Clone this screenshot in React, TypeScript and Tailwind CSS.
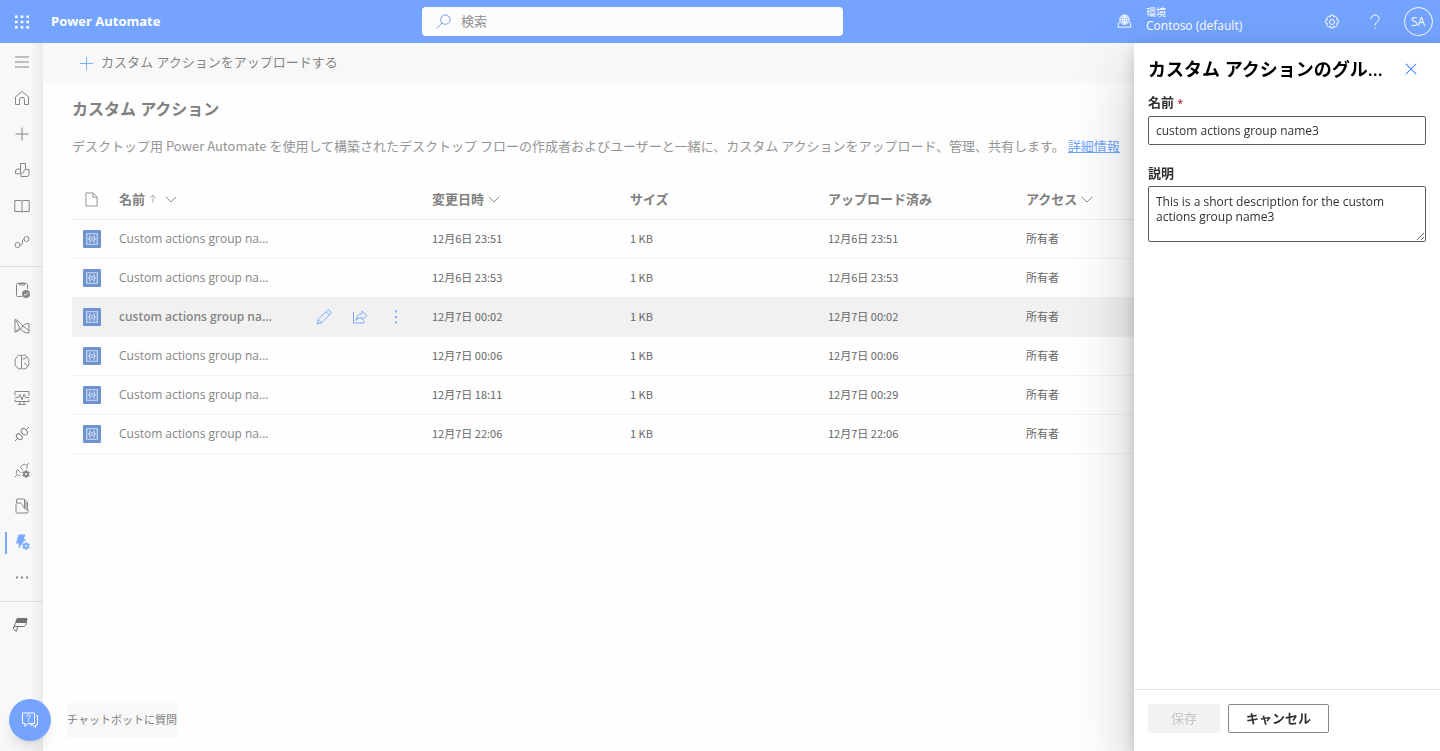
import type { ReactNode } from 'react';
import { clsx } from 'clsx';

const rows = [
  { id: 1, name: 'Custom actions group na...', modified: '12月6日 23:51', size: '1 KB', uploaded: '12月6日 23:51', access: '所有者' },
  { id: 2, name: 'Custom actions group na...', modified: '12月6日 23:53', size: '1 KB', uploaded: '12月6日 23:53', access: '所有者' },
  { id: 3, name: 'custom actions group na...', modified: '12月7日 00:02', size: '1 KB', uploaded: '12月7日 00:02', access: '所有者', selected: true },
  { id: 4, name: 'Custom actions group na...', modified: '12月7日 00:06', size: '1 KB', uploaded: '12月7日 00:06', access: '所有者' },
  { id: 5, name: 'Custom actions group na...', modified: '12月7日 18:11', size: '1 KB', uploaded: '12月7日 00:29', access: '所有者' },
  { id: 6, name: 'Custom actions group na...', modified: '12月7日 22:06', size: '1 KB', uploaded: '12月7日 22:06', access: '所有者' },
];

function Icon({ children, className = 'w-4 h-4' }: { children: ReactNode; className?: string }) {
  return (
    <svg viewBox="0 0 16 16" className={className} fill="none" stroke="currentColor" strokeWidth="1" aria-hidden="true">
      {children}
    </svg>
  );
}

const gear = (
  <>
    <circle cx="12" cy="12" r="2" strokeWidth="1.8" />
    <path d="M12 8v2M12 14v2M8.500 10l1.800 1M13.700 13l1.800 1M8.500 14l1.800-1M13.700 11l1.800-1" strokeWidth="1.500" />
  </>
);

const topNav = [
  { label: 'メニュー', icon: <path d="M1 3h14M1 8h14M1 13h14" /> },
  { label: 'ホーム', icon: <path d="M1.500 7 8 1.500 14.500 7v7.500h-4V9.800a2.500 2.500 0 0 0-5 0v4.700h-4z" strokeLinejoin="round" /> },
  { label: '作成', icon: <path d="M8 1.500v13M1.500 8h13" /> },
  {
    label: 'テンプレート',
    icon: <path d="M6.500 1.500h5v6H15v5c0 1-.8 2-2 2H7v-3l-1-.5-1.500 1-3-.5V8.500l2-1.500h3v3c1 1.500 3.500 1.500 3.500-.5 0-1.300.5-2 1.500-2M6.500 7V1.500" strokeLinejoin="round" />,
  },
  { label: '詳細', icon: <path d="M.8 2.500h6a1.200 1.200 0 0 1 1.200 1 1.200 1.200 0 0 1 1.200-1h6v11h-6a1.200 1.200 0 0 0-1.200.8 1.200 1.200 0 0 0-1.200-.8h-6zM8 3.500v10.500" /> },
  {
    label: 'マイ フロー',
    icon: (
      <>
        <circle cx="3.500" cy="11" r="2.500" />
        <circle cx="12.500" cy="5" r="2.500" />
        <path d="M6 11h.5c3 0 1-6 3.500-6" />
      </>
    ),
  },
];

const mainNav = [
  {
    label: '承認',
    icon: (
      <>
        <path d="M8 14.500H3.500a1 1 0 0 1-1-1v-11a1 1 0 0 1 1-1h9a1 1 0 0 1 1 1V7M5.500 1h5v2h-5z" />
        <circle cx="12" cy="12" r="4" fill="currentColor" stroke="none" />
        <path d="m10 12 1.400 1.400 2.500-2.700" stroke="#f8f8f8" />
      </>
    ),
  },
  { label: 'ソリューション', icon: <path d="M1 1.500v12.500c4-.5 5.500-3 8-6 1.500-1.700 3-2.500 6-2.500v9.500c-5 0-7-2-9.500-5M1 1.500c3 .3 4.500 3.500 8 6.500l6 4.500M1 1.500c1.500 1 3 4 4.500 8.500L1 14" strokeLinejoin="round" /> },
  {
    label: 'プロセス マイニング',
    icon: <path d="M7.500 1v14M7.500 1.500C5 .5 3.500 1.500 3.200 3.200 1 4 .5 6.500 1.500 8c-1 2.200-.5 4 1.500 5 .8 2 3 2.500 4.500 1.500M8.500 1.500c2.500-1 4 0 4.300 1.700 2.200.8 2.700 3.300 1.700 4.800 1 2.200.5 4-1.500 5-.8 2-3 2.500-4.500 1.500M8.500 5c2 0 3.500 0 4-2M10 9.500c2 0 3 1 3 3" />,
  },
  { label: '監視', icon: <path d="M1 5.500V1.500h14v4M1 9.500v2h14v-2M1 7.500h3.500l1.500-3 2 5.500 2-6 1.500 3.500H15M6 11.500v3M10 11.500v3M4 14.500h8" /> },
  {
    label: '接続',
    icon: (
      <>
        <path d="m1 15 2.700-2.700M12.300 3.700 15 1" />
        <ellipse cx="5.300" cy="10.700" rx="2.300" ry="3.400" transform="rotate(-45 5.300 10.700)" />
        <ellipse cx="10.300" cy="5.700" rx="2.600" ry="3.600" transform="rotate(-45 10.300 5.700)" />
      </>
    ),
  },
  {
    label: 'カスタム コネクタ',
    icon: (
      <>
        <path d="m1 15 2.500-2.500M12.500 3.500 15 1M3.500 7.500l3.500 3.500M3.500 7.500c-1.300 1.500-1.300 3.800-.2 5 1 1.200 2.200 1.100 3.200.3M12.500 7c1-1.500 1-2.500 0-3.700S9.500 2 8 3.500L6.500 5.500 9 8" />
        {gear}
      </>
    ),
  },
  { label: 'データ', icon: <path d="M2 5.500V14a1 1 0 0 0 1 1h10a1 1 0 0 0 1-1v-2.500c-5 1-4.500-6-8-6.500H2.500V2a1 1 0 0 1 1-1h7v9M12 2v8.500M13.500 4v7" strokeLinejoin="round" /> },
  {
    label: 'カスタム アクション',
    active: true,
    icon: (
      <>
        <path d="M4.500.5h7L9.800 5H12L9.500 8l-5 7L5 9.500H2z" fill="currentColor" stroke="none" />
        <circle cx="12" cy="12" r="4.500" fill="#f8f8f8" stroke="none" />
        {gear}
      </>
    ),
  },
  { label: 'その他', icon: <path d="M2 7.500h2M7 7.500h2M12 7.500h2" strokeWidth="2" /> },
];

function NavItem({ label, icon, active }: { label: string; icon: ReactNode; active?: boolean }) {
  return (
    <button
      type="button"
      aria-label={label}
      className={clsx('relative flex h-9 w-full items-center justify-center', active ? 'text-[#78aaff]' : 'text-[#858585]')}
    >
      {active && <span className="absolute left-[5px] top-2 h-[22px] w-0.5 bg-[#78aaff]" />}
      <Icon>{icon}</Icon>
    </button>
  );
}

function Chevron() {
  return (
    <Icon className="h-3 w-3 text-[#8c8c8c]">
      <path d="m1 5 7 7 7-7" strokeWidth="1.300" />
    </Icon>
  );
}

function HeaderBar() {
  return (
    <header className="flex h-[43px] shrink-0 items-center bg-[#74a4ff] text-white">
      <div className="flex w-[422px] shrink-0 items-center">
        <button type="button" aria-label="アプリ起動ツール" className="flex h-[43px] w-[43px] items-center justify-center">
          <Icon className="h-[14px] w-[14px]">
            <path d="M0 2h16M0 8h16M0 14h16" strokeWidth="3" strokeDasharray="3 3.500" />
          </Icon>
        </button>
        <a href="#" className="ml-2 text-[13px] font-bold">Power Automate</a>
      </div>
      <label className="flex h-[29px] w-[421px] items-center gap-2.5 rounded-sm bg-[#fcfcfc] px-3.5">
        <Icon className="h-[15px] w-[15px] text-[#7297dd]">
          <circle cx="10" cy="6" r="5" />
          <path d="M6.500 9.500.5 15.500" />
        </Icon>
        <input type="search" aria-label="検索" placeholder="検索" className="min-w-0 flex-1 text-[13px] outline-none placeholder:text-[#909090]" />
      </label>
      <div className="ml-auto flex items-center">
        <div className="flex w-[193px] items-center gap-[14px]">
          <Icon className="h-[15px] w-[15px]">
            <circle cx="8" cy="6" r="5" />
            <path d="M3 6h10M4 3.500h8M4 8.500h8M8 1v10M8 1C5 3.500 5 8.500 8 11M8 1c3 2.500 3 7.500 0 10M3 9H2L1 14h14l-1-5h-1" />
          </Icon>
          <div className="pb-1">
            <div className="text-[10px] leading-3">環境</div>
            <div className="text-[12px] leading-4">Contoso (default)</div>
          </div>
        </div>
        <button type="button" aria-label="設定" className="flex h-[43px] w-[43px] items-center justify-center">
          <Icon>
            <circle cx="8" cy="8" r="2.500" />
            <path d="m6.700 1.200 2.600 0 .5 1.900 1.700-1 1.900 1.900-1 1.700 1.900.5v2.800l-1.900.5 1 1.700-1.900 1.900-1.700-1-.5 1.900H6.700l-.5-1.900-1.700 1-1.900-1.900 1-1.700-1.900-.5V6.200l1.900-.5-1-1.700 1.900-1.900 1.700 1z" strokeLinejoin="round" />
          </Icon>
        </button>
        <button type="button" aria-label="ヘルプ" className="flex h-[43px] w-[43px] items-center justify-center">
          <Icon>
            <path d="M4 5c0-2.500 1.700-4 4-4s4 1.500 4 3.700C12 8 8 8 8 11.500M8 13.500V15" />
          </Icon>
        </button>
        <button type="button" aria-label="アカウント" className="flex h-[43px] w-11 items-center justify-center">
          <span className="flex h-[29px] w-[29px] items-center justify-center rounded-full border border-white text-[12px]">SA</span>
        </button>
      </div>
    </header>
  );
}

function Sidebar() {
  return (
    <nav className="w-[43px] shrink-0 bg-linear-to-r from-[#f8f8f8] from-70% to-[#ebebeb] pt-px">
      {topNav.map((item) => (
        <NavItem key={item.label} {...item} />
      ))}
      <hr className="mt-1.5 mb-[5px] border-[#dcdcdc]" />
      {mainNav.map((item) => (
        <NavItem key={item.label} {...item} />
      ))}
      <hr className="my-[5px] border-[#dcdcdc]" />
      <button type="button" aria-label="Power Platform" className="flex h-9 w-10 items-center justify-center text-[#707070]">
        <Icon>
          <path d="M5.500 1.500h8.500c1 0 1.300.7 1 1.500l-1 2.500H4c0-2 .3-3.300 1.500-4z" fill="currentColor" />
          <path d="M4 5.500 2 9.500h9.500c1.500 0 2.500-1.500 3-4zM2 9.500l-.7 1.500 2.700 3.500 2-5M2 9.500l4.500 0" strokeLinejoin="round" />
        </Icon>
      </button>
    </nav>
  );
}

function GroupBadge() {
  return (
    <span className="flex h-[18px] w-[18px] items-center justify-center rounded-[1px] bg-[#6f92d0] text-[#d4e0f5]">
      <Icon className="h-3 w-3">
        <path d="M1 1h14v14H1z" strokeWidth="1.500" />
        <path d="M6.500 4H5v3L3.500 8 5 9v3h1.500M9.500 4H11v3l1.500 1L11 9v3H9.500M6.500 6.500h3M6.500 9.500h3" strokeWidth="1.500" />
      </Icon>
    </span>
  );
}

function ActionsTable() {
  return (
    <table className="mt-6 w-full table-fixed border-collapse text-left">
      <colgroup>
        <col className="w-[47px]" />
        <col className="w-[313px]" />
        <col className="w-[198px]" />
        <col className="w-[198px]" />
        <col className="w-[198px]" />
        <col />
      </colgroup>
      <thead>
        <tr className="h-[39px] border-b border-[#ededed] text-[13px] text-[#808080]">
          <th className="pl-3">
            <Icon className="h-[15px] w-[15px] text-[#909090]">
              <path d="M2 1h7.500L14 5.500V15H2zM9.500 1v4.500H14" />
            </Icon>
          </th>
          <th className="font-semibold">
            <span className="flex items-center gap-1">
              名前
              <Icon className="h-3 w-2 text-[#a0a0a0]">
                <path d="M8 16V0M2 6l6-6 6 6" strokeWidth="1.500" />
              </Icon>
              <span className="ml-1"><Chevron /></span>
            </span>
          </th>
          <th className="font-semibold">
            <span className="flex items-center gap-1">変更日時 <Chevron /></span>
          </th>
          <th className="font-semibold">サイズ</th>
          <th className="font-semibold">アップロード済み</th>
          <th className="font-semibold">
            <span className="flex items-center gap-1">アクセス <Chevron /></span>
          </th>
        </tr>
      </thead>
      <tbody className="font-['Noto_Sans_CJK_JP',sans-serif]">
        {rows.map((row) => (
          <tr key={row.id} className={clsx('h-[39px] border-b border-[#f3f3f3] text-[11px] text-[#666]', row.selected && 'bg-[#f1f1f1]')}>
            <td className="pl-[11px]"><GroupBadge /></td>
            <td>
              <div className="flex items-center">
                <a href="#" className={clsx("w-[187px] font-['Open_Sans',sans-serif] text-[12px] text-[#858585]", row.selected && 'font-semibold')}>{row.name}</a>
                {row.selected && (
                  <div className="flex text-[#7aaaff]">
                    <button type="button" aria-label="編集" className="flex h-9 w-9 items-center justify-center">
                      <Icon><path d="m1 15 1.200-4.500L11.500 1.200c1.800-.8 4 1.500 3.300 3.300L5.500 13.800zM10 2.700 13.300 6M2.200 10.500l3.300 3.300" strokeLinejoin="round" /></Icon>
                    </button>
                    <button type="button" aria-label="共有" className="flex h-9 w-9 items-center justify-center">
                      <Icon><path d="M1.500 3v11H12v-2.500M10 2l5 4.500-5 4.500V8.500c-3 0-4.500 1-6 3C4.500 7.500 6.500 5 10 4.700z" strokeLinejoin="round" /></Icon>
                    </button>
                    <button type="button" aria-label="その他のコマンド" className="flex h-9 w-9 items-center justify-center">
                      <Icon><path d="M8 1.500v2M8 7v2M8 12.500v2" strokeWidth="2" /></Icon>
                    </button>
                  </div>
                )}
              </div>
            </td>
            <td>{row.modified}</td>
            <td>{row.size}</td>
            <td>{row.uploaded}</td>
            <td>{row.access}</td>
          </tr>
        ))}
      </tbody>
    </table>
  );
}

function EditPanel() {
  return (
    <aside className="fixed top-[43px] right-0 bottom-0 flex w-[306px] flex-col bg-white text-[#323130] shadow-[0_26px_58px_rgba(0,0,0,0.22),0_5px_14px_rgba(0,0,0,0.18)]">
      <div className="flex flex-1 flex-col px-3.5">
        <div className="flex h-[52px] items-center justify-between">
          <h2 className="text-[18px] font-semibold text-black">カスタム アクションのグル...</h2>
          <button type="button" aria-label="閉じる" className="flex h-[30px] w-[30px] items-center justify-center text-[#2f74f5]">
            <Icon className="h-3 w-3"><path d="m1 1 14 14M15 1 1 15" strokeWidth="1.400" /></Icon>
          </button>
        </div>
        <label htmlFor="group-name" className="mb-1.5 text-[13px] leading-[14px] font-semibold">
          名前 <span className="text-[10px] text-[#a4262c]">*</span>
        </label>
        <input id="group-name" defaultValue="custom actions group name3" className="h-[29px] rounded-xs border border-[#605e5c] px-[7px] text-[12px]" />
        <label htmlFor="group-description" className="mt-[21px] mb-1.5 text-[13px] leading-[14px] font-semibold">説明</label>
        <textarea
          id="group-description"
          defaultValue="This is a short description for the custom actions group name3"
          className="h-14 rounded-xs border border-[#605e5c] px-[7px] py-[7px] text-[12px] leading-[15px]"
        />
      </div>
      <footer className="flex gap-2 border-t border-[#e8e8e8] px-3.5 pt-3.5 pb-[18px] text-[13px]">
        <button type="button" disabled className="h-[29px] w-[72px] rounded-xs bg-[#f3f2f1] text-[#c8c6c4]">保存</button>
        <button type="button" className="h-[29px] w-[101px] rounded-xs border border-[#8a8886] font-semibold">キャンセル</button>
      </footer>
    </aside>
  );
}

export default function App() {
  return (
    <div lang="ja" className="flex min-h-screen flex-col bg-[#fefefe] font-['Open_Sans','Noto_Sans_CJK_JP',sans-serif]">
      <HeaderBar />
      <div className="flex flex-1">
        <Sidebar />
        <main className="min-w-0 flex-1">
          <div className="flex h-10 items-center bg-[#f8f8f8] pl-9">
            <button type="button" className="flex items-center gap-[7px] text-[13px] text-[#858585]">
              <Icon className="h-[15px] w-[15px] text-[#7aaaff]"><path d="M8 1v14M1 8h14" /></Icon>
              カスタム アクションをアップロードする
            </button>
          </div>
          <div className="px-[29px] pt-3.5">
            <h1 className="text-[16px] leading-6 font-semibold text-[#808080]">カスタム アクション</h1>
            <p className="mt-[15px] font-['Noto_Sans_CJK_JP',sans-serif] text-[13px] leading-5 whitespace-nowrap text-[#959595]">
              デスクトップ用 Power Automate を使用して構築されたデスクトップ フローの作成者およびユーザーと一緒に、カスタム アクションをアップロード、管理、共有します。{' '}
              <a href="#" className="text-[#6ea4ff] underline">詳細情報</a>
            </p>
            <ActionsTable />
          </div>
        </main>
      </div>
      <div className="fixed bottom-[10px] left-[9px] flex items-center gap-4">
        <button type="button" aria-label="チャットボットに質問" className="flex h-[42px] w-[42px] items-center justify-center rounded-full bg-[#74a4ff] text-white shadow-lg">
          <Icon>
            <path d="M.5 1h12v10.500H6l-3 3v-3H.5zM14 3.500h1.500V13h-2v2.500L11 13H8M4.800 4.500c0-2.500 3.700-2 3.400.2C8 6 6.500 6 6.500 7.500M6.500 8.700v1" />
          </Icon>
        </button>
        <span className="flex h-[35px] items-center bg-[#f8f8f8] text-[11px] text-[#808080]">チャットボットに質問</span>
      </div>
      <EditPanel />
    </div>
  );
}
